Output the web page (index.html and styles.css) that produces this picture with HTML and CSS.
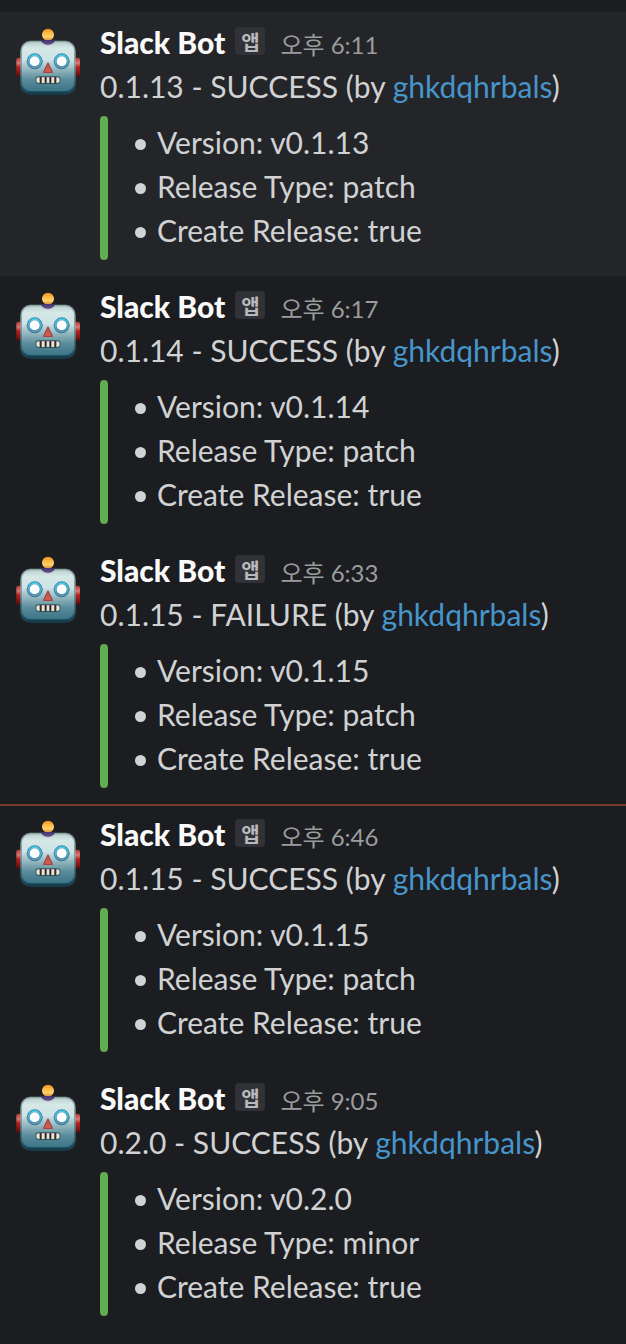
FILE: index.html
```
<!DOCTYPE html>
<html lang="ko">
<head>
<meta charset="utf-8">
<meta name="viewport" content="width=device-width, initial-scale=1">
<title>Slack Bot</title>
<link rel="stylesheet" href="styles.css">
</head>
<body>
<svg class="defs" aria-hidden="true">
  <defs>
    <linearGradient id="face" x1="0" y1="0" x2="0" y2="1">
      <stop offset="0" stop-color="#b9cfcf"/>
      <stop offset=".12" stop-color="#d6e8e7"/>
      <stop offset=".35" stop-color="#cfe3e4"/>
      <stop offset=".52" stop-color="#9dbfc6"/>
      <stop offset=".75" stop-color="#5d8d9c"/>
      <stop offset="1" stop-color="#397587"/>
    </linearGradient>
    <linearGradient id="shell" x1="0" y1="0" x2="0" y2="1">
      <stop offset="0" stop-color="#8da5a4"/>
      <stop offset=".4" stop-color="#86a5aa"/>
      <stop offset=".7" stop-color="#3f7181"/>
      <stop offset=".9" stop-color="#1c4c5e"/>
      <stop offset="1" stop-color="#173542"/>
    </linearGradient>
    <linearGradient id="ear" x1="0" y1="0" x2="0" y2="1">
      <stop offset="0" stop-color="#b3322d"/>
      <stop offset=".28" stop-color="#dc7a72"/>
      <stop offset=".5" stop-color="#b3221e"/>
      <stop offset="1" stop-color="#5d0d0e"/>
    </linearGradient>
    <linearGradient id="bulb" x1="0" y1="0" x2="0" y2="1">
      <stop offset="0" stop-color="#f08a1c"/>
      <stop offset=".3" stop-color="#fdb53c"/>
      <stop offset=".65" stop-color="#ffd370"/>
      <stop offset="1" stop-color="#d98a35"/>
    </linearGradient>
    <linearGradient id="ring" x1="0" y1="0" x2="0" y2="1">
      <stop offset="0" stop-color="#318fb2"/>
      <stop offset="1" stop-color="#3b7291"/>
    </linearGradient>
    <linearGradient id="glow" x1="0" y1="0" x2="0" y2="1">
      <stop offset="0" stop-color="#4fd0ee"/>
      <stop offset="1" stop-color="#5f96b3"/>
    </linearGradient>
    <linearGradient id="nose" x1="0" y1="0" x2="0" y2="1">
      <stop offset="0" stop-color="#b9534e"/>
      <stop offset="1" stop-color="#df5c55"/>
    </linearGradient>
    <linearGradient id="hat" x1="0" y1="0" x2="0" y2="1">
      <stop offset="0" stop-color="#3a2a5c"/>
      <stop offset="1" stop-color="#66579a"/>
    </linearGradient>
    <filter id="soft" x="-10%" y="-10%" width="120%" height="120%">
      <feGaussianBlur stdDeviation="2"/>
    </filter>
    <symbol id="robot" viewBox="36 72 216 216">
      <rect x="49" y="173" width="18" height="57" rx="6" fill="url(#ear)"/>
      <rect x="222" y="173" width="18" height="57" rx="6" fill="url(#ear)"/>
      <rect x="61" y="122" width="166" height="163" rx="31" fill="url(#shell)" filter="url(#soft)"/>
      <rect x="66" y="127" width="156" height="147" rx="26" fill="url(#face)" filter="url(#soft)"/>
      <circle cx="144" cy="104" r="18" fill="url(#bulb)"/>
      <path d="M121 118Q144 124 167 118Q161 135 144 135Q127 135 121 118Z" fill="url(#hat)"/>
      <g id="eye">
        <circle cx="104" cy="184" r="24" fill="url(#ring)"/>
        <circle cx="104" cy="184" r="21" fill="url(#glow)"/>
        <circle cx="104" cy="184" r="17" fill="#3f87ac"/>
        <circle cx="104" cy="184" r="15" fill="#ffffff"/>
      </g>
      <use href="#eye" x="81"/>
      <path d="M144 189L157 217H131Z" fill="url(#nose)" stroke="#a34747" stroke-width="4" stroke-linejoin="round"/>
      <rect x="106" y="229" width="76" height="23" rx="11" fill="#35525c"/>
      <rect x="109" y="232" width="70" height="17" rx="8" fill="#e6e4dd"/>
      <path d="M122 231V250M137 231V250M151 231V250M166 231V250" stroke="#302b29" stroke-width="6"/>
    </symbol>
  </defs>
</svg>
<main class="messages">
  <article class="message message-hover">
    <svg class="avatar" role="img" aria-label="Slack Bot"><use href="#robot"/></svg>
    <div class="content">
      <header class="header"><span class="name">Slack Bot</span><span class="badge">앱</span><time class="time">오후 6:11</time></header>
      <p class="text">0.1.13 - SUCCESS (by <a class="link" href="#ghkdqhrbals">ghkdqhrbals</a>)</p>
      <div class="attachment"><ul class="list"><li>Version: v0.1.13</li><li>Release Type: patch</li><li>Create Release: true</li></ul></div>
    </div>
  </article>
  <article class="message">
    <svg class="avatar" role="img" aria-label="Slack Bot"><use href="#robot"/></svg>
    <div class="content">
      <header class="header"><span class="name">Slack Bot</span><span class="badge">앱</span><time class="time">오후 6:17</time></header>
      <p class="text">0.1.14 - SUCCESS (by <a class="link" href="#ghkdqhrbals">ghkdqhrbals</a>)</p>
      <div class="attachment"><ul class="list"><li>Version: v0.1.14</li><li>Release Type: patch</li><li>Create Release: true</li></ul></div>
    </div>
  </article>
  <article class="message">
    <svg class="avatar" role="img" aria-label="Slack Bot"><use href="#robot"/></svg>
    <div class="content">
      <header class="header"><span class="name">Slack Bot</span><span class="badge">앱</span><time class="time">오후 6:33</time></header>
      <p class="text">0.1.15 - FAILURE (by <a class="link" href="#ghkdqhrbals">ghkdqhrbals</a>)</p>
      <div class="attachment"><ul class="list"><li>Version: v0.1.15</li><li>Release Type: patch</li><li>Create Release: true</li></ul></div>
    </div>
  </article>
  <article class="message message-unread">
    <svg class="avatar" role="img" aria-label="Slack Bot"><use href="#robot"/></svg>
    <div class="content">
      <header class="header"><span class="name">Slack Bot</span><span class="badge">앱</span><time class="time">오후 6:46</time></header>
      <p class="text">0.1.15 - SUCCESS (by <a class="link" href="#ghkdqhrbals">ghkdqhrbals</a>)</p>
      <div class="attachment"><ul class="list"><li>Version: v0.1.15</li><li>Release Type: patch</li><li>Create Release: true</li></ul></div>
    </div>
  </article>
  <article class="message">
    <svg class="avatar" role="img" aria-label="Slack Bot"><use href="#robot"/></svg>
    <div class="content">
      <header class="header"><span class="name">Slack Bot</span><span class="badge">앱</span><time class="time">오후 9:05</time></header>
      <p class="text">0.2.0 - SUCCESS (by <a class="link" href="#ghkdqhrbals">ghkdqhrbals</a>)</p>
      <div class="attachment"><ul class="list"><li>Version: v0.2.0</li><li>Release Type: minor</li><li>Create Release: true</li></ul></div>
    </div>
  </article>
</main>
</body>
</html>
```
FILE: styles.css
```
* {
  box-sizing: border-box;
}

body {
  margin: 0;
  background: #1c1d20;
  color: #d1d2d3;
  font: 30px/44px Lato, "Noto Sans CJK KR", sans-serif;
}

.defs {
  position: absolute;
  width: 0;
  height: 0;
}

.messages {
  padding: 12px 0;
}

.message {
  display: flex;
  gap: 16px;
  padding: 8px 12px 16px;
}

.message-hover {
  background: #242529;
}

.message-unread {
  box-shadow: inset 0 2px #7c3a2d;
}

.avatar {
  flex: none;
  width: 72px;
  height: 72px;
  margin-top: 4px;
}

.content {
  flex: 1;
  min-width: 0;
}

.header {
  display: flex;
  height: 44px;
  align-items: baseline;
}

.name {
  color: #fafafa;
  font-weight: 900;
}

.badge {
  align-self: flex-start;
  width: 30px;
  height: 28px;
  margin: 7px 15px 0 10px;
  border-radius: 4px;
  background: #313236;
  color: #b9babd;
  font-size: 20px;
  font-weight: 700;
  line-height: 30px;
  text-align: center;
}

.time {
  color: #9b9c9e;
  font-size: 24px;
}

.text {
  margin: 0;
}

.link {
  color: #4695cb;
  text-decoration: none;
}

.attachment {
  display: flex;
  margin-top: 8px;
}

.attachment::before {
  content: "";
  width: 8px;
  border-radius: 4px;
  background: #60ae52;
}

.list {
  margin: 0;
  padding: 4px 0 8px 27px;
  list-style: none;
}

.list li {
  display: flex;
  align-items: center;
  gap: 11px;
}

.list li::before {
  content: "";
  width: 11px;
  height: 11px;
  margin-top: 4px;
  border-radius: 50%;
  background: #d1d2d3;
}
```
